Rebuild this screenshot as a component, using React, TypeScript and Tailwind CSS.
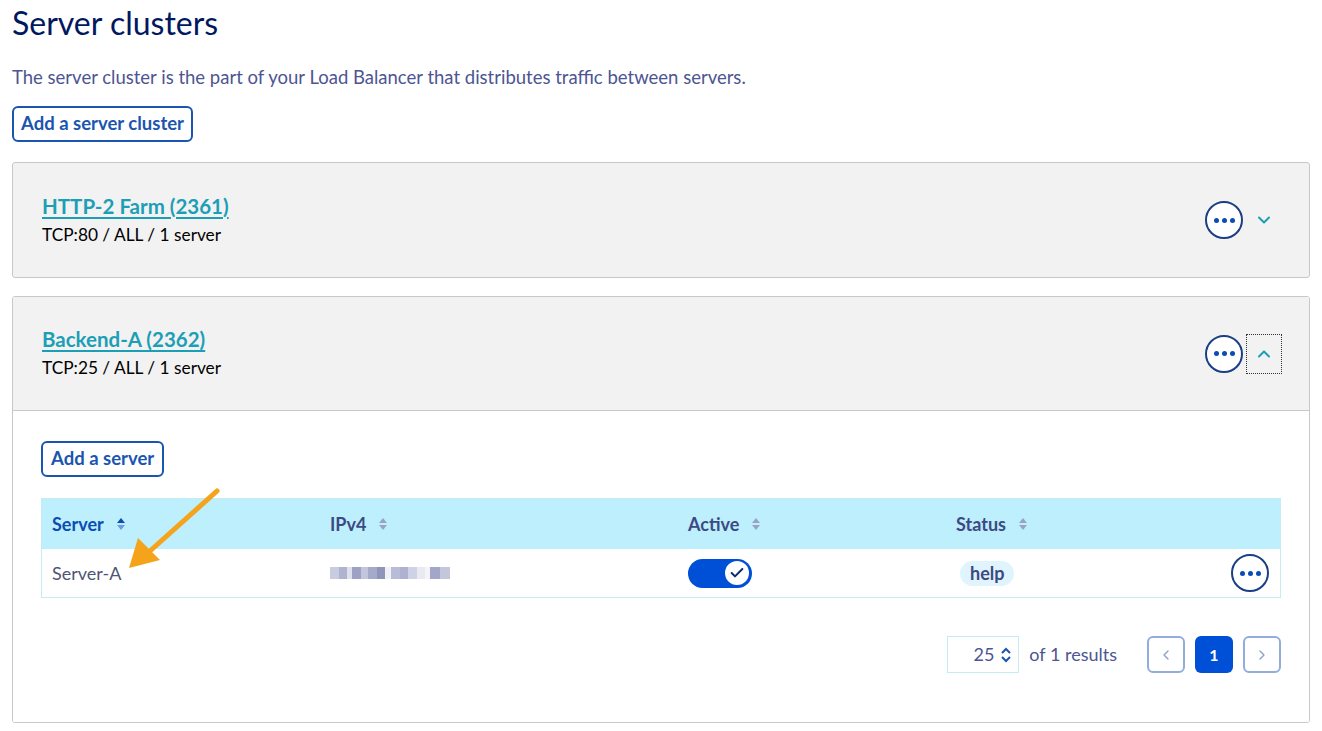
import { ChevronDown, ChevronUp, ChevronLeft, ChevronRight, Check } from 'lucide-react';

const font = { fontFamily: 'Lato, "Open Sans", sans-serif' };

const EllipsisButton = () => (
  <button className="w-[38px] h-[38px] rounded-full border-2 border-[#1a3f85] bg-white flex items-center justify-center gap-[3px]">
    <span className="w-[5px] h-[5px] rounded-full bg-[#0a4db3]" />
    <span className="w-[5px] h-[5px] rounded-full bg-[#0a4db3]" />
    <span className="w-[5px] h-[5px] rounded-full bg-[#0a4db3]" />
  </button>
);

const SortIcon = ({ active }: { active?: boolean }) => (
  <svg width="10" height="14" viewBox="0 0 10 14" className="ml-3">
    <path d="M5 1 L9 6 H1 Z" fill={active ? '#0a4db3' : '#9aa3c4'} />
    <path d="M5 13 L9 8 H1 Z" fill={active ? '#6f9be0' : '#9aa3c4'} />
  </svg>
);

const BlurredIp = () => {
  const blocks = [
    ['#c9cbe0', 9], ['#b0b3d0', 8], ['#dfe0ec', 5], ['#9da1c4', 9], ['#c3c5dc', 7], ['#a5a9ca', 9],
    ['#8f94bb', 8], ['#f0f0f6', 6], ['#b9bcd6', 9], ['#aeb1cf', 8], ['#cfd1e4', 9], ['#e8e9f2', 8],
    ['#f4f4f8', 5], ['#a2a6c8', 10], ['#c4c6dc', 10],
  ] as const;
  return (
    <div className="flex items-center h-[14px]">
      {blocks.map(([c, w], i) => (
        <span key={i} className="h-[12px]" style={{ backgroundColor: c, width: w }} />
      ))}
    </div>
  );
};

const ClusterHeader = ({ name, sub, open }: { name: string; sub: string; open?: boolean }) => (
  <div className={`flex items-center justify-between ${open ? 'h-[113px]' : 'h-[114px]'} pl-[29px] pr-[27px]`}>
    <div className="flex flex-col">
      <a className="text-[20.5px] font-bold text-[#1c9fb6] underline underline-offset-[3px] leading-[26px]">{name}</a>
      <span className="text-[17.3px] text-black leading-[26px] mt-[3px]">{sub}</span>
    </div>
    <div className="flex items-center gap-[3px]">
      <EllipsisButton />
      {open ? (
        <div className="w-[36px] h-[40px] border border-dotted border-[#333] flex items-center justify-center">
          <ChevronUp size={20} strokeWidth={2.4} className="text-[#1c9fb6]" />
        </div>
      ) : (
        <div className="w-[36px] h-[40px] flex items-center justify-center">
          <ChevronDown size={20} strokeWidth={2.4} className="text-[#1c9fb6]" />
        </div>
      )}
    </div>
  </div>
);

export default function App() {
  return (
    <div className="relative bg-white min-h-[731px] px-3 pt-[1px]" style={font}>
      <h1 className="text-[32px] text-[#00185e] leading-[44px]">Server clusters</h1>
      <p className="text-[18.5px] text-[#4d5592] mt-[20px] leading-[24px]">
        The server cluster is the part of your Load Balancer that distributes traffic between servers.
      </p>
      <button className="mt-[17px] h-[36px] px-[7px] border-2 border-[#1a55b0] rounded-[6px] text-[18.5px] font-bold text-[#1a55b0]">
        Add a server cluster
      </button>

      <div className="mt-[20px] w-[1298px] bg-[#f2f2f2] border border-[#c8c8c8] rounded-[3px]">
        <ClusterHeader name="HTTP-2 Farm (2361)" sub="TCP:80 / ALL / 1 server" />
      </div>

      <div className="mt-[18px] w-[1298px] border border-[#c8c8c8] rounded-[3px] overflow-hidden">
        <div className="bg-[#f2f2f2] border-b border-[#c8c8c8]">
          <ClusterHeader name="Backend-A (2362)" sub="TCP:25 / ALL / 1 server" open />
        </div>
        <div className="bg-white px-[28px] pt-[30px] pb-[49px]">
          <button className="h-[36px] px-[8px] border-2 border-[#1a55b0] rounded-[6px] text-[18.5px] font-bold text-[#1a55b0]">
            Add a server
          </button>

          <div className="mt-[21px] border border-[#c6ebf3]">
            <div className="grid grid-cols-[288px_358px_268px_1fr] items-center h-[50px] bg-[#bdeffd] text-[18px] font-bold">
              <div className="flex items-center pl-[10px] text-[#0a4db3]">Server<SortIcon active /></div>
              <div className="flex items-center text-[#3c4a84]">IPv4<SortIcon /></div>
              <div className="flex items-center text-[#3c4a84]">Active<SortIcon /></div>
              <div className="flex items-center text-[#3c4a84]">Status<SortIcon /></div>
            </div>
            <div className="grid grid-cols-[288px_358px_268px_1fr] items-center h-[48px] bg-white text-[18px]">
              <div className="pl-[10px] text-[#4f5475]">Server-A</div>
              <div><BlurredIp /></div>
              <div>
                <div className="w-[64px] h-[29px] rounded-full bg-[#0050d7] flex items-center justify-end pr-[3px]">
                  <span className="w-[24px] h-[24px] rounded-full bg-white flex items-center justify-center">
                    <Check size={16} strokeWidth={3} className="text-[#0a2d6e]" />
                  </span>
                </div>
              </div>
              <div className="flex items-center justify-between pr-[11px]">
                <span className="ml-[4px] px-[10px] h-[25px] leading-[25px] rounded-full bg-[#dff4fc] text-[#3c4a84] font-bold">help</span>
                <EllipsisButton />
              </div>
            </div>
          </div>

          <div className="mt-[38px] flex items-center justify-end gap-[10px]">
            <div className="w-[72px] h-[37px] border border-[#c6ebf3] flex items-center justify-end pr-[6px] gap-[6px] text-[18px] text-[#4d5592]">
              25
              <svg width="12" height="16" viewBox="0 0 12 16">
                <path d="M2 6 L6 2 L10 6" fill="none" stroke="#1a55b0" strokeWidth="2" />
                <path d="M2 10 L6 14 L10 10" fill="none" stroke="#1a55b0" strokeWidth="2" />
              </svg>
            </div>
            <span className="text-[18px] text-[#4d5592] mr-[20px]">of 1 results</span>
            <button className="w-[38px] h-[37px] rounded-[6px] border-2 border-[#92addb] flex items-center justify-center">
              <ChevronLeft size={16} className="text-[#8da0c8]" />
            </button>
            <button className="w-[38px] h-[37px] rounded-[6px] bg-[#0050d7] text-white font-bold text-[16px] flex items-center justify-center">
              1
            </button>
            <button className="w-[38px] h-[37px] rounded-[6px] border-2 border-[#92addb] flex items-center justify-center">
              <ChevronRight size={16} className="text-[#8da0c8]" />
            </button>
          </div>
        </div>
      </div>

      <svg className="absolute left-0 top-0 pointer-events-none" width="1322" height="731">
        <line x1="217" y1="491" x2="150" y2="551" stroke="#f5a31a" strokeWidth="5" strokeLinecap="round" />
        <path d="M129 568 L138 538 L160 560 Z" fill="#f5a31a" />
      </svg>
    </div>
  );
}
